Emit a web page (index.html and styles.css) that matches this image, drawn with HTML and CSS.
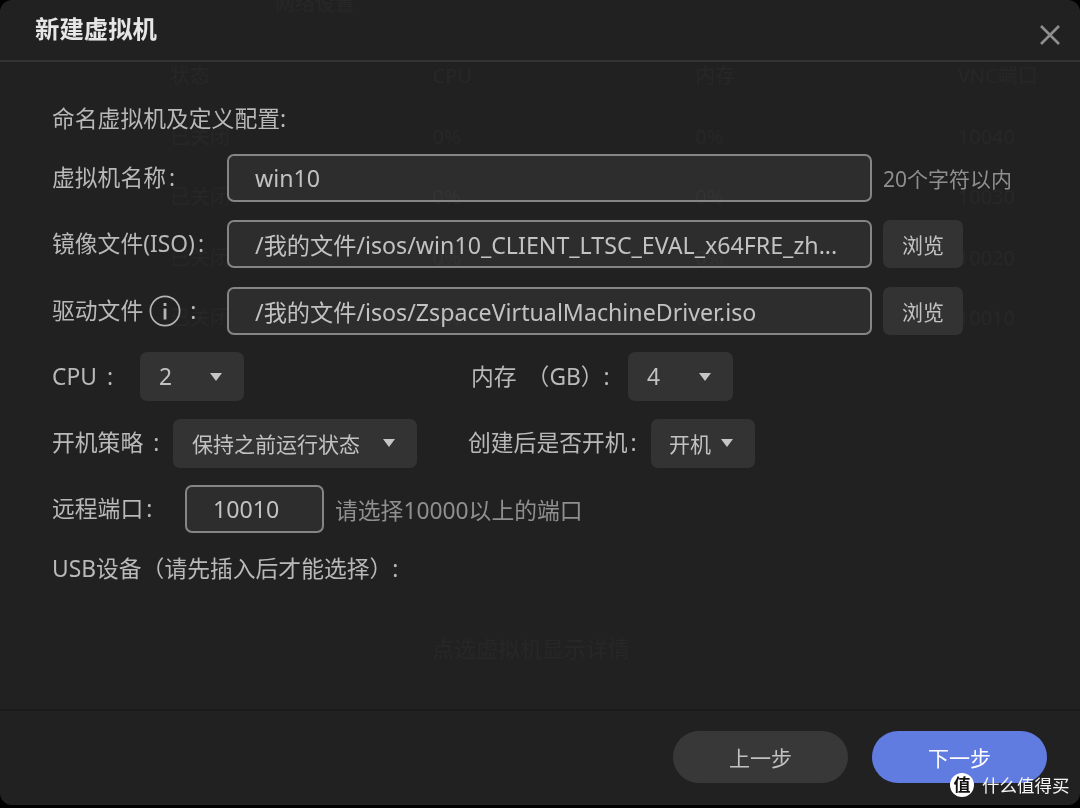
FILE: index.html
```html
<!DOCTYPE html>
<html lang="zh-CN">
<head>
<meta charset="utf-8">
<title>新建虚拟机</title>
<link rel="stylesheet" href="styles.css">
</head>
<body>
<div class="backdrop">
  <div class="bg-tab">网络设置</div>
  <div class="bg-table">
    <span>状态</span><span>CPU</span><span>内存</span><span>VNC端口</span>
    <span>已关闭</span><span>0%</span><span>0%</span><span>10040</span>
    <span>已关闭</span><span>0%</span><span>0%</span><span>10030</span>
    <span>已关闭</span><span>0%</span><span>0%</span><span>10020</span>
    <span>已关闭</span><span>0%</span><span>0%</span><span>10010</span>
  </div>
  <div class="bg-empty">点选虚拟机显示详情</div>
</div>

<section class="dialog">
  <header class="dialog-head">
    <h1 class="dialog-title">新建虚拟机</h1>
    <svg class="close" viewBox="0 0 20 20" width="20" height="20"><path d="M1 1 L19 19 M19 1 L1 19" fill="none" stroke="#8f8f8f" stroke-width="2.6"/></svg>
  </header>

  <div class="dialog-body">
    <p class="section-title">命名虚拟机及定义配置:</p>
    <div class="form">
      <div class="row">
        <span class="label label-wide">虚拟机名称<span class="c-near">:</span></span>
        <div class="input input-long">win10</div>
        <span class="hint hint-tip">20个字符以内</span>
      </div>
      <div class="row">
        <span class="label label-wide">镜像文件(ISO)<span class="c-near">:</span></span>
        <div class="input input-long">/我的文件/isos/win10_CLIENT_LTSC_EVAL_x64FRE_zh...</div>
        <button class="browse">浏览</button>
      </div>
      <div class="row">
        <span class="label label-wide label-icon">驱动文件
          <svg class="info" viewBox="0 0 32 32" width="32" height="32"><circle cx="16" cy="16" r="14.6" fill="none" stroke="#b4b4b4" stroke-width="1.7"/><rect x="14.6" y="13.5" width="2.8" height="11" fill="#b4b4b4"/><rect x="14.6" y="8" width="2.8" height="3" fill="#b4b4b4"/></svg>
          <span class="colon">:</span>
        </span>
        <div class="input input-long">/我的文件/isos/ZspaceVirtualMachineDriver.iso</div>
        <button class="browse">浏览</button>
      </div>
      <div class="row">
        <span class="label label-cpu">CPU<span class="c-far">:</span></span>
        <div class="select select-cpu"><span>2</span><i class="caret"></i></div>
        <span class="label label-mem">内存<span class="paren">（GB）</span>:</span>
        <div class="select select-mem"><span>4</span><i class="caret"></i></div>
      </div>
      <div class="row">
        <span class="label label-boot">开机策略<span class="c-far">:</span></span>
        <div class="select select-boot"><span>保持之前运行状态</span><i class="caret"></i></div>
        <span class="label label-after">创建后是否开机<span class="c-near">:</span></span>
        <div class="select select-after"><span>开机</span><i class="caret"></i></div>
      </div>
      <div class="row">
        <span class="label label-port">远程端口<span class="c-near">:</span></span>
        <div class="input input-port">10010</div>
        <span class="hint hint-port">请选择10000以上的端口</span>
      </div>
    </div>
    <p class="usb">USB设备（请先插入后才能选择）:</p>
  </div>

  <footer class="dialog-foot">
    <button class="pill pill-prev">上一步</button>
    <button class="pill pill-next">下一步</button>
  </footer>
</section>

<div class="watermark"><span class="wm-logo">值</span><span>什么值得买</span></div>
</body>
</html>
```
FILE: styles.css
```css
* { box-sizing: border-box; }
html, body { margin: 0; height: 100%; }
body {
  width: 1080px;
  height: 808px;
  overflow: hidden;
  background: #000;
  color: #b9b9b9;
  font-family: "Noto Sans", "Noto Sans CJK SC", sans-serif;
}

/* page dimmed behind the dialog */
.backdrop { height: 808px; padding-left: 170px; color: #8c8c8c; font-size: 20px; line-height: 28px; }
.bg-tab { margin: -10px 0 0 105px; height: 72px; }
.bg-table { display: grid; grid-template-columns: repeat(3, 262.6px) 122px; grid-auto-rows: 60.6px; }
.bg-empty { margin: 268px 0 0 262px; font-size: 22px; line-height: 30px; }

.dialog {
  position: fixed;
  left: 0;
  top: 0;
  width: 1080px;
  height: 805px;
  display: flex;
  flex-direction: column;
  border-radius: 12px;
  background: rgba(34, 34, 34, 0.96);
}
.dialog-head {
  height: 62px;
  flex: none;
  display: flex;
  align-items: center;
  justify-content: space-between;
  padding: 0 20px 0 35px;
  border-bottom: 2px solid #333;
}
.dialog-title { margin: 0 0 3px; font-size: 24.4px; line-height: 30px; font-weight: 700; color: #e6e6e6; }
.close { margin-top: 10px; }

.dialog-body { flex: 1; padding: 41px 0 0 52px; font-size: 22.8px; }
.section-title { margin: 0 0 20px; line-height: 31px; }
.form { display: flex; flex-direction: column; gap: 18.3px; }
.row { display: flex; align-items: center; height: 48px; }
.label { flex: none; white-space: nowrap; line-height: 30px; }
.c-near { margin-left: 3px; }
.c-far { margin-left: 10px; }
.paren { margin-left: 10px; }
.label-wide { width: 175px; }
.label-icon { display: flex; align-items: center; }
.info { margin-left: 6px; }
.colon { margin-left: 9px; }
.label-cpu { width: 88px; }
.label-mem { width: 157px; margin-left: 227px; }
.label-boot { width: 121px; }
.label-after { width: 183px; margin-left: 51px; }
.label-port { width: 133px; }

.input {
  height: 48px;
  padding-left: 26px;
  display: flex;
  align-items: center;
  border: 2px solid #858585;
  border-radius: 7px;
  background: rgba(255, 255, 255, 0.055);
  color: #c2c2c2;
  font-size: 23.2px;
  white-space: nowrap;
  overflow: hidden;
}
.input-long { width: 645px; }
.input-port { width: 139px; }
.hint { color: #8f8f8f; white-space: nowrap; }
.hint-tip { margin-left: 11px; font-size: 21px; }
.hint-port { margin-left: 11px; }

.browse {
  width: 80px;
  height: 48px;
  margin-left: 11px;
  border: 0;
  border-radius: 7px;
  background: #333;
  color: #c2c2c2;
  font-family: inherit;
  font-size: 21px;
}

.select {
  height: 49px;
  flex: none;
  display: flex;
  align-items: center;
  justify-content: space-between;
  padding: 0 22px 0 19px;
  border-radius: 7px;
  background: #333;
  color: #c2c2c2;
}
.select-cpu { width: 104px; }
.select-mem { width: 105px; }
.select-boot { width: 244px; font-size: 21px; }
.select-after { width: 104px; font-size: 21px; padding-left: 18px; }
.caret {
  width: 0;
  height: 0;
  border-left: 6.5px solid transparent;
  border-right: 6.5px solid transparent;
  border-top: 8px solid #c6c6c6;
}
.usb { margin: 20px 0 0; line-height: 31px; }

.dialog-foot {
  height: 96px;
  flex: none;
  display: flex;
  justify-content: flex-end;
  gap: 24px;
  padding: 20px 33px 0 0;
  border-top: 2px solid #1b1b1b;
}
.pill {
  width: 175px;
  height: 52px;
  border: 0;
  border-radius: 26px;
  font-family: inherit;
  font-size: 21px;
}
.pill-prev { background: #383838; color: #c2c2c2; }
.pill-next { background: #617ce0; color: #fff; }

.watermark {
  position: fixed;
  left: 950px;
  top: 773px;
  display: flex;
  align-items: center;
  gap: 8px;
  color: #f4f4f4;
  font-size: 17.5px;
  line-height: 24px;
}
.wm-logo {
  width: 24px;
  height: 24px;
  border-radius: 50%;
  background: #fff;
  color: #111;
  font-size: 17px;
  font-weight: 700;
  text-align: center;
}
```
